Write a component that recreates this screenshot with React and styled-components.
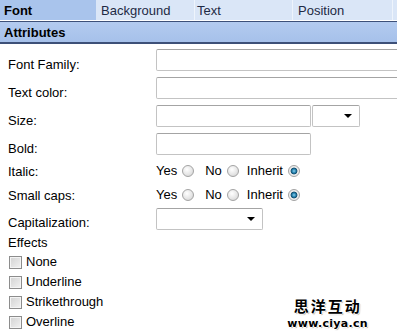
import React from 'react';
import styled, { createGlobalStyle } from 'styled-components';

const GlobalStyle = createGlobalStyle`
    html, body {
        margin: 0;
        padding: 0;
        background: #fff;
        overflow: hidden;
    }
    body {
        font-family: "Liberation Sans", Arial, sans-serif;
        font-size: 13px;
        color: #000;
    }
`;

const Page = styled.div`
    position: relative;
    width: 397px;
    height: 336px;
    overflow: hidden;
`;

const TabBar = styled.div`
    display: flex;
    height: 20px;
    background: #dae6f7;
`;

const Tab = styled.div`
    flex: 0 0 ${props => props.width}px;
    box-sizing: border-box;
    padding: 1px 0 0 ${props => props.pad}px;
    line-height: 19px;
    background: ${props => props.active ? '#a9c4ec' : '#dae6f7'};
    font-weight: ${props => props.active ? 'bold' : 'normal'};
    color: ${props => props.active ? '#000' : '#1e2a44'};
    border-right: 1px solid ${props => props.active ? '#a9c4ec' : '#eef4fc'};
`;

const SectionHeader = styled.div`
    margin-top: 1px;
    height: 19px;
    padding: 1px 0 0 4px;
    line-height: 19px;
    font-weight: bold;
    background: linear-gradient(#b3cbef, #a6c1ea);
    border-top: 1px solid #3d5078;
    border-bottom: 2px solid #3d5078;
`;

const Form = styled.div`
    padding: 2px 0 0 8px;
`;

const Row = styled.div`
    display: flex;
    align-items: flex-start;
    height: ${props => props.h}px;
    box-sizing: border-box;
`;

const Label = styled.div`
    flex: 0 0 148px;
    line-height: 15px;
    padding-top: ${props => props.top}px;
`;

const TextBox = styled.div`
    margin-top: ${props => props.top ?? 3}px;
    width: ${props => props.width}px;
    height: 20px;
    flex: 0 0 auto;
    border: 1px solid #c3c3c3;
    border-top-color: #a4a4a4;
    border-radius: 2px;
    background: #fff;
`;

const SelectBox = styled(TextBox)`
    position: relative;
    margin-left: ${props => props.gap ?? 0}px;
    &:after {
        content: '';
        position: absolute;
        right: 7px;
        top: 8px;
        border-left: 4px solid transparent;
        border-right: 4px solid transparent;
        border-top: 4px solid #000;
    }
`;

const Choices = styled.div`
    display: flex;
    align-items: center;
    line-height: 15px;
    padding-top: 5px;
`;

const Choice = styled.label`
    display: flex;
    align-items: center;
    margin-right: ${props => props.after}px;
`;

const Radio = styled.span`
    width: 12px;
    height: 12px;
    margin-left: 5px;
    box-sizing: border-box;
    border-radius: 50%;
    border: 1px solid #a3a3a3;
    background: ${props => props.checked
        ? 'radial-gradient(circle at 50% 50%, #8fd0ea 0, #2a87b4 25%, #0f4766 45%, #e9e9e9 52%, #f7f7f7 100%)'
        : 'radial-gradient(circle at 40% 35%, #ffffff 0, #e6e6e6 55%, #cfcfcf 100%)'};
`;

const EffectsTitle = styled.div`
    height: 20px;
    box-sizing: border-box;
    padding-top: 1px;
    line-height: 15px;
`;

const CheckRow = styled.label`
    display: flex;
    align-items: flex-start;
    height: 20px;
    line-height: 15px;
    padding-left: 1px;
`;

const Check = styled.span`
    width: 13px;
    height: 13px;
    margin: 2px 4px 0 0;
    box-sizing: border-box;
    border: 1px solid #8c8c8c;
    background: linear-gradient(135deg, #d2d2d2, #f2f2f2);
    box-shadow: inset 0 0 0 1px #f4f4f4;
`;

const Watermark = styled.div`
    position: absolute;
    right: 29px;
    bottom: 7px;
    display: flex;
    flex-direction: column;
    align-items: center;
    gap: 4px;
    font-weight: bold;
    color: #000;
    text-shadow: 1px 0 0 #fff, -1px 0 0 #fff, 0 1px 0 #fff, 0 -1px 0 #fff, 1px 1px 1px #999;
`;

const WatermarkTitle = styled.div`
    font-family: "Noto Sans CJK SC", sans-serif;
    font-size: 15px;
    line-height: 16px;
    height: 16px;
    letter-spacing: 2px;
`;

const WatermarkUrl = styled.div`
    font-family: "DejaVu Sans", sans-serif;
    font-size: 11px;
    line-height: 11px;
    height: 11px;
    letter-spacing: 0.3px;
`;

const tabs = [
    { name: 'Font', width: 96, pad: 4, active: true },
    { name: 'Background', width: 99, pad: 5 },
    { name: 'Text', width: 98, pad: 2 },
    { name: 'Position', width: 100, pad: 5 },
];

const RadioGroup = () => (
    <Choices>
        <Choice after={11}>Yes<Radio /></Choice>
        <Choice after={8}>No<Radio /></Choice>
        <Choice after={0}>Inherit<Radio checked /></Choice>
    </Choices>
);

const effects = ['None', 'Underline', 'Strikethrough', 'Overline'];

const App = () => (
    <Page>
        <GlobalStyle />
        <TabBar>
            {tabs.map(tab =>
                <Tab key={tab.name} width={tab.width} pad={tab.pad} active={tab.active}>{tab.name}</Tab>
            )}
        </TabBar>
        <SectionHeader>Attributes</SectionHeader>
        <Form>
            <Row h={28}>
                <Label top={11}>Font Family:</Label>
                <TextBox width={260} />
            </Row>
            <Row h={28}>
                <Label top={11}>Text color:</Label>
                <TextBox width={260} />
            </Row>
            <Row h={28}>
                <Label top={11}>Size:</Label>
                <TextBox width={153} />
                <SelectBox width={46} gap={1} />
            </Row>
            <Row h={28}>
                <Label top={11}>Bold:</Label>
                <TextBox width={153} />
            </Row>
            <Row h={24}>
                <Label top={6}>Italic:</Label>
                <RadioGroup />
            </Row>
            <Row h={24}>
                <Label top={6}>Small caps:</Label>
                <RadioGroup />
            </Row>
            <Row h={28}>
                <Label top={9}>Capitalization:</Label>
                <SelectBox width={105} top={2} />
            </Row>
            <EffectsTitle>Effects</EffectsTitle>
            {effects.map(effect =>
                <CheckRow key={effect}><Check />{effect}</CheckRow>
            )}
        </Form>
        <Watermark>
            <WatermarkTitle>思洋互动</WatermarkTitle>
            <WatermarkUrl>www.ciya.cn</WatermarkUrl>
        </Watermark>
    </Page>
);

export default App;
